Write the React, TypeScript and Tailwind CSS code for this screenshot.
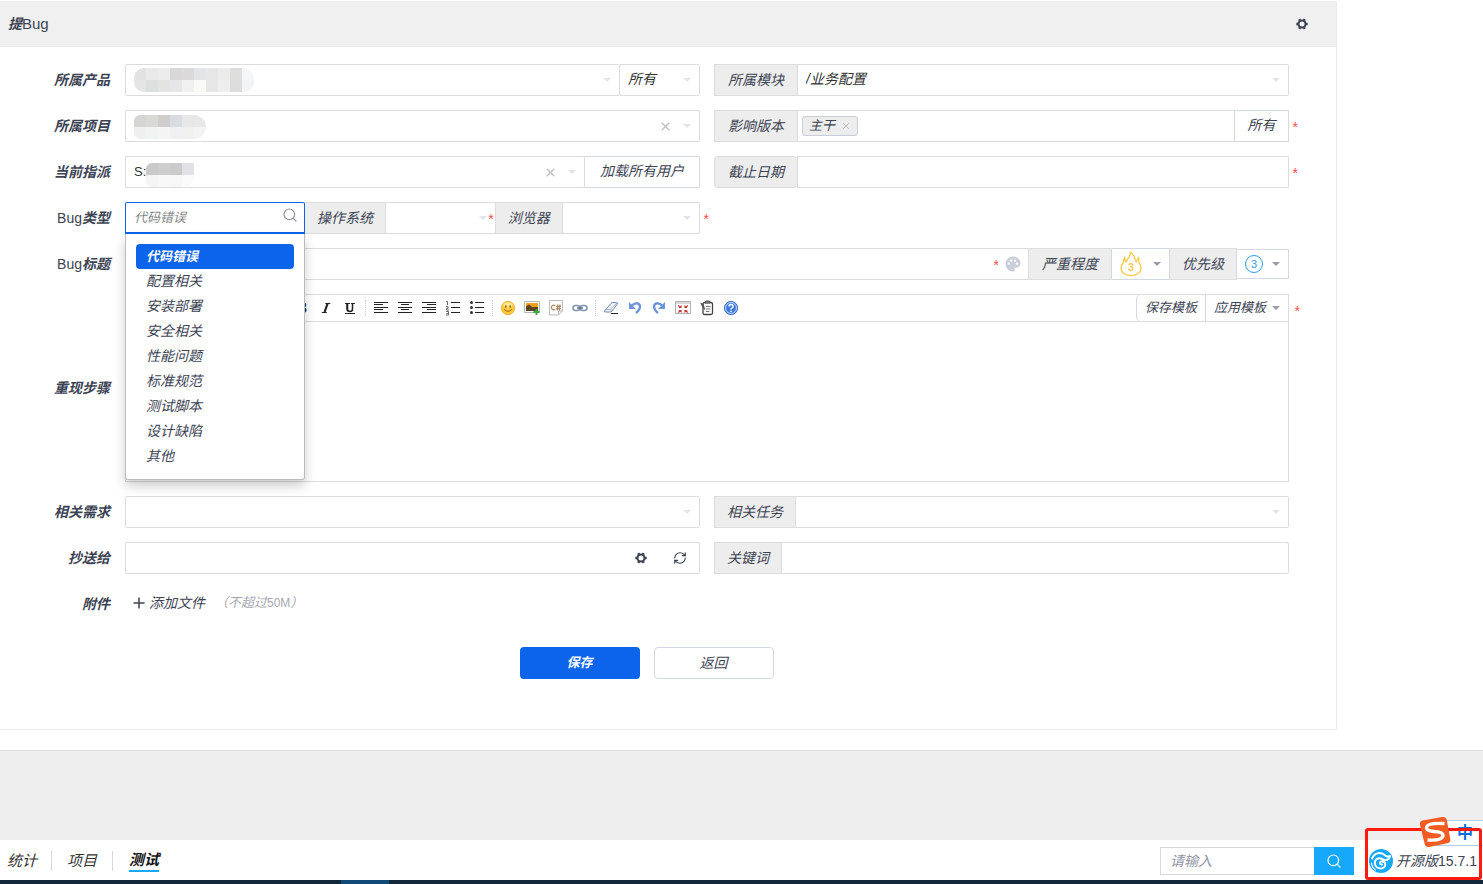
import type { ReactNode } from "react";
import { RefreshCw, Search, X } from "lucide-react";
import { MdPalette } from "react-icons/md";

const bugTypes = [
    "代码错误",
    "配置相关",
    "安装部署",
    "安全相关",
    "性能问题",
    "标准规范",
    "测试脚本",
    "设计缺陷",
    "其他",
];

const productBlocks = [
    ["#e1e2e3", "#e9e9ea", "#ececec", "#d8d8da", "#dbd9da", "#e3e4e5", "#e6e6e7", "#ebebeb", "#dededd", "#f4f5f6"],
    ["#e5e5e5", "#dcdfde", "#e3e3e2", "#e6e6e9", "#f0f0f1", "#f9f9f7", "#e6e6e6", "#ededee", "#dcdcdc", "#f3f4f5"],
];

const projectBlocks = [
    ["#d5d5d4", "#d8d8d7", "#cfcecd", "#d8dce1", "#e6e7e6", "#e8e8e8"],
    ["#efefee", "#f1f3f2", "#f5f4f5", "#eef0f2", "#f0f0ef", "#f3f3f3"],
];

const userBlocks = [
    ["#c9c9ca", "#cdcdce", "#cbcbcb", "#e0e1e6"],
    ["#f5f5f5", "#f8f8f8", "#f7f7f7", "#fafafa"],
];

function Mosaic({ rows, radius }: { rows: string[][]; radius: string }) {
    return (
        <div className={`overflow-hidden ${radius}`}>
            <svg width={rows[0].length * 12} height="24" shapeRendering="crispEdges" className="block">
                {rows.map((row, y) =>
                    row.map((color, x) => (
                        <rect key={`${x}-${y}`} x={x * 12} y={y * 12} width="12" height="12" fill={color} />
                    ))
                )}
            </svg>
        </div>
    );
}

function Gear() {
    return (
        <svg width="12" height="12" viewBox="0 0 12 12" fill="none" stroke="currentColor">
            <circle cx="6" cy="6" r="3.5" strokeWidth="2" />
            <path d="M.3 6H2M10 6h1.700M3.200 1.200L4 2.500M8 9.500l.8 1.300M8.800 1.200L8 2.500M4 9.500l-.8 1.300" strokeWidth="2.400" />
        </svg>
    );
}

function Caret({ className }: { className: string }) {
    return (
        <svg width="8" height="4" viewBox="0 0 8 4" fill="currentColor" className={className}>
            <path d="M0 0h8L4 4z" />
        </svg>
    );
}

function Star({ className }: { className: string }) {
    return <span className={`absolute not-italic leading-5 text-[#ff4d4f] ${className}`}>*</span>;
}

function Addon({ htmlFor, className = "px-[13px]", children }: { htmlFor?: string; className?: string; children: ReactNode }) {
    return (
        <label
            htmlFor={htmlFor}
            className={`flex h-8 shrink-0 items-center whitespace-nowrap border border-[#dcdcdc] bg-[#ededed] text-[#3c4353] ${className}`}
        >
            {children}
        </label>
    );
}

type SelectProps = {
    id: string;
    label?: string;
    value?: string;
    className?: string;
    clearable?: boolean;
    upright?: boolean;
    children?: ReactNode;
};

function Select({ id, label, value = "", className = "flex-1", clearable, upright, children }: SelectProps) {
    return (
        <div className={`relative min-w-0 ${className}`}>
            <select
                id={id}
                aria-label={label}
                className={`h-8 w-full appearance-none rounded-xs border border-[#dcdcdc] bg-white pl-2 pr-6 text-[#333] outline-none ${upright ? "text-[13px] not-italic" : "pb-0.5"}`}
            >
                <option>{value}</option>
            </select>
            {children}
            {clearable && (
                <button type="button" aria-label="清除" className="absolute right-7 top-[10px] text-[#c4c4c4]">
                    <X size={13} strokeWidth={3} />
                </button>
            )}
            <Caret className="pointer-events-none absolute right-[9px] top-[14px] text-[#e2e4ea]" />
        </div>
    );
}

function Row({ label, htmlFor, labelClass = "h-8", children }: { label: ReactNode; htmlFor?: string; labelClass?: string; children: ReactNode }) {
    return (
        <div className="flex">
            <label
                htmlFor={htmlFor}
                className={`flex w-[125px] shrink-0 items-center justify-end pr-[15px] font-bold text-[#3c4353] ${labelClass}`}
            >
                {label}
            </label>
            <div className="min-w-0 flex-1">{children}</div>
        </div>
    );
}

function Tool({ name, children }: { name: string; children: ReactNode }) {
    return (
        <button type="button" aria-label={name} className="flex h-full w-6 shrink-0 items-center justify-center">
            <svg width="16" height="16" viewBox="0 0 16 16" fill="none">
                {children}
            </svg>
        </button>
    );
}

function ToolGap() {
    return (
        <span className="flex h-4 w-[7px] shrink-0 justify-center">
            <span className="w-px border-l border-dotted border-[#ccc]" />
        </span>
    );
}

function Toolbar() {
    return (
        <div className="flex h-[27px] items-center overflow-hidden border-b border-[#dcdcdc] pl-[164px]">
            <button type="button" className="w-6 shrink-0 font-serif text-[15px] font-bold not-italic text-[#222]">B</button>
            <Tool name="斜体">
                <path d="M9.6 3.5L6.6 12" stroke="#222" strokeWidth="2.2" />
                <path d="M7.3 3.5h5M3.8 12.5h5" stroke="#222" />
            </Tool>
            <Tool name="下划线">
                <path d="M5.5 3v6q0 2.5 2.5 2.500T10.500 9V3" stroke="#222" strokeWidth="1.5" />
                <path d="M5 3v6q0 1.5 1 2" stroke="#222" strokeWidth="1.5" />
                <path d="M3 3.5h5M9 3.5h4M3 13.5h10" stroke="#222" />
            </Tool>
            <ToolGap />
            <Tool name="左对齐">
                <path d="M1 2.5h14M1 4.5h9M1 7.5h14M1 9.5h9M1 12.5h14" stroke="#222" />
            </Tool>
            <Tool name="居中">
                <path d="M1 2.5h14M4 4.5h8M1 7.5h14M4 9.5h8M1 12.5h14" stroke="#222" />
            </Tool>
            <Tool name="右对齐">
                <path d="M1 2.5h14M6 4.5h9M1 7.5h14M6 9.5h9M1 12.5h14" stroke="#222" />
            </Tool>
            <Tool name="编号">
                <path d="M6 2.5h9M6 7.5h9M6 12.5h9" stroke="#222" />
                <path d="M1 1.5h1.500V5M1 6.500h2v2H1.500V10H4M1 11.500h2.500V15H1M1.500 13.500h2" stroke="#555" strokeWidth="0.9" />
            </Tool>
            <Tool name="项目符号">
                <path d="M6 2.5h9M6 7.5h9M6 12.5h9" stroke="#222" />
                <circle cx="2.5" cy="2.5" r="1.5" fill="#333" />
                <circle cx="2.5" cy="7.5" r="1.5" fill="#333" />
                <circle cx="2.5" cy="12.5" r="1.5" fill="#333" />
            </Tool>
            <ToolGap />
            <Tool name="表情">
                <circle cx="8" cy="8" r="6.7" fill="#fcc93a" stroke="#e8ad35" strokeWidth="0.8" />
                <ellipse cx="8" cy="4.8" rx="4.6" ry="2.5" fill="#ffe78c" />
                <ellipse cx="5.8" cy="6.5" rx="0.8" ry="1.2" fill="#7b5a20" />
                <ellipse cx="10.2" cy="6.5" rx="0.8" ry="1.2" fill="#7b5a20" />
                <path d="M3.8 9q4.2 4.6 8.4 0" stroke="#9a681a" />
            </Tool>
            <Tool name="图片">
                <path d="M.5 1.5h15v11H.5z" fill="#fff" stroke="#b5b5b5" />
                <path d="M2 3h12v4H2z" fill="#f0a01c" />
                <path d="M2 6.5l3-2L8 7h6v4H2z" fill="#5b4622" />
                <path d="M12.5 9v6M9.5 12h6" stroke="#3aa845" strokeWidth="2" />
            </Tool>
            <Tool name="代码">
                <path d="M1.5.5h13V11l-4 4h-9z" fill="#fafafa" stroke="#bbb" />
                <path d="M14.5 11h-4v4" stroke="#bbb" />
                <path d="M7.3 5.5Q3.5 4.3 3.5 7.5t3.8 2M9.8 4.5l-.5 6M12 4.5l-.5 6M8.3 6.400H13M8 8.6h4.8" stroke="#a5825a" strokeWidth="1.1" />
            </Tool>
            <Tool name="链接">
                <rect x="1" y="5.5" width="7" height="5" rx="2.5" stroke="#8093ab" strokeWidth="1.5" />
                <rect x="8" y="5.5" width="7" height="5" rx="2.5" stroke="#8093ab" strokeWidth="1.5" />
                <path d="M5 8h6" stroke="#526b8c" strokeWidth="1.5" />
            </Tool>
            <ToolGap />
            <Tool name="清除格式">
                <path d="M1.5 11L8 3.500q.8-.9 2-.9h3.300q1.800 0 .9 1.700L9 11q-.8 1-2 1H2.700q-1.700 0-1.200-1z" fill="#f5f8fc" stroke="#6d86ad" />
                <path d="M2 10l5-.8q1.500-.1 1.500 1.800M7.500 9L14 3" stroke="#8ba0c2" strokeWidth="0.8" />
                <path d="M8 13.5h7" stroke="#222" />
            </Tool>
            <Tool name="撤销">
                <path d="M4 6q6-4.5 8.300-1.500Q14.500 8 9 13" stroke="#6d95dc" strokeWidth="2.4" />
                <path d="M2 2v7h7z" fill="#6d95dc" />
            </Tool>
            <Tool name="重做">
                <path d="M12 6Q6 1.500 3.700 4.500 1.500 8 7 13" stroke="#6d95dc" strokeWidth="2.4" />
                <path d="M14 2v7H7z" fill="#6d95dc" />
            </Tool>
            <Tool name="全屏">
                <path d="M.5 1.5h15v12H.5z" fill="#fff" stroke="#b0b0b0" />
                <path d="M1 3h14" stroke="#ccc" strokeWidth="1.5" />
                <path d="M3 5.5l3 2M13 5.5l-3 2M3 12.5l3-2M13 12.5l-3-2" stroke="#d33a3a" strokeWidth="1.4" />
                <path d="M6.5 5v3h-3zM9.5 5v3h3zM6.5 13v-3h-3zM9.5 13v-3h3z" fill="#c52c2c" />
            </Tool>
            <Tool name="源代码">
                <rect x="4" y="2.5" width="9.5" height="12" rx="1.5" stroke="#444" strokeWidth="1.3" />
                <path d="M6 3l1-2h3.500l1 2z" fill="#999" stroke="#444" />
                <path d="M7 6.5h4.500M7 9h4.500M7 11.500h3.500" stroke="#777" />
                <path d="M1 2.5L4.500 4l2 6.500-3-3z" fill="#555" />
            </Tool>
            <Tool name="帮助">
                <circle cx="8" cy="8" r="6.6" fill="#3f7bdc" stroke="#3a6cc4" />
                <circle cx="8" cy="8" r="5.5" stroke="#dbe8fb" strokeWidth="0.9" />
                <path d="M6 6.600q0-2 2-2t2 1.800q0 1.200-1.200 1.700-.8.400-.8 1.300M8 10.700V12" stroke="#fff" strokeWidth="1.5" />
            </Tool>
            <div className="ml-auto flex h-full shrink-0 text-[13px] text-[#3c4353]">
                <button type="button" className="rounded-l border-l border-[#d5d8e0] px-2">保存模板</button>
                <button type="button" className="flex items-center gap-[6px] border-l border-[#d5d8e0] px-2">
                    应用模板
                    <Caret className="text-[#9a9ca8]" />
                </button>
            </div>
        </div>
    );
}

function BugTypePicker() {
    return (
        <div className="relative w-[180px] shrink-0">
            <input
                id="type"
                placeholder="代码错误"
                className="h-8 w-full rounded-t-xs border border-b-2 border-[#0c64eb] bg-white pb-px pl-2 pr-8 text-[13px] outline-none placeholder:text-[#888]"
            />
            <Search size={16} strokeWidth={1.8} className="absolute right-[7px] top-[5px] text-[#8b91a5]" />
            <ul className="absolute left-0 top-8 z-10 w-full rounded-b-[3px] border border-t-0 border-[#bbb] bg-white p-[10px] shadow-[0_6px_12px_rgba(0,0,0,0.2)]">
                {bugTypes.map((type, index) => (
                    <li key={type}>
                        <button
                            type="button"
                            className={
                                index === 0
                                    ? "block h-[25px] w-full rounded-[4px] bg-[#0c64eb] px-[10px] text-left text-[13px] font-bold leading-[25px] text-white"
                                    : "block h-[25px] w-full px-[10px] text-left leading-[25px] text-[#3c4353]"
                            }
                        >
                            {type}
                        </button>
                    </li>
                ))}
            </ul>
        </div>
    );
}

function BugForm() {
    return (
        <form className="flex flex-col gap-[14px] pb-[50px] pr-[47px] pt-[17px]">
            <Row label="所属产品" htmlFor="product">
                <div className="grid grid-cols-2 gap-[14px]">
                    <div className="flex">
                        <Select id="product">
                            <div className="pointer-events-none absolute left-[9px] top-1">
                                <Mosaic rows={productBlocks} radius="rounded-[10px]" />
                            </div>
                        </Select>
                        <Select id="branch" label="分支" value="所有" className="-ml-px w-[81px]" />
                    </div>
                    <div className="flex">
                        <Addon htmlFor="module">所属模块</Addon>
                        <Select id="module" value="/业务配置" className="-ml-px flex-1" />
                    </div>
                </div>
            </Row>

            <Row label="所属项目" htmlFor="project">
                <div className="grid grid-cols-2 gap-[14px]">
                    <Select id="project" clearable className="w-full">
                        <div className="pointer-events-none absolute left-[9px] top-[5px]">
                            <Mosaic rows={projectBlocks} radius="rounded-r-[12px] rounded-l-[6px]" />
                        </div>
                    </Select>
                    <div className="relative flex">
                        <Addon htmlFor="build">影响版本</Addon>
                        <div className="-ml-px flex h-8 min-w-0 flex-1 items-center border border-[#dcdcdc] px-1">
                            <span className="flex h-5 shrink-0 items-center gap-[6px] rounded-[3px] border border-[#c9cdd8] bg-[#ededed] px-[6px] text-[13px] text-[#3c4353]">
                                主干
                                <button type="button" aria-label="移除主干" className="text-[#b5b5b5]">
                                    <X size={10} strokeWidth={2} />
                                </button>
                            </span>
                            <input id="build" className="h-6 min-w-0 flex-1 outline-none" />
                        </div>
                        <button type="button" className="-ml-px h-8 w-[55px] border border-[#d5d8e0] pb-0.5 text-[#3c4353]">
                            所有
                        </button>
                        <Star className="-right-[9px] top-[7px]" />
                    </div>
                </div>
            </Row>

            <Row label="当前指派" htmlFor="assigned">
                <div className="grid grid-cols-2 gap-[14px]">
                    <div className="flex">
                        <Select id="assigned" value="S:" clearable upright>
                            <div className="pointer-events-none absolute left-[21px] top-[7px]">
                                <Mosaic rows={userBlocks} radius="rounded-l-[6px] rounded-br-[10px]" />
                            </div>
                        </Select>
                        <button type="button" className="-ml-px h-8 w-[116px] rounded-r-xs border border-[#d5d8e0] pb-0.5 text-[#3c4353]">
                            加载所有用户
                        </button>
                    </div>
                    <div className="relative flex">
                        <Addon htmlFor="deadline" className="rounded px-[13px]">截止日期</Addon>
                        <input id="deadline" className="-ml-px h-8 min-w-0 flex-1 border border-[#dcdcdc] px-2 outline-none" />
                        <Star className="-right-[9px] top-[7px]" />
                    </div>
                </div>
            </Row>

            <Row label={<><span className="font-medium not-italic">Bug</span>类型</>} htmlFor="type">
                <div className="grid grid-cols-2 gap-[14px]">
                    <div className="relative flex">
                        <BugTypePicker />
                        <Addon htmlFor="os" className="-ml-px px-3">操作系统</Addon>
                        <div className="relative -ml-px min-w-0 flex-[4]">
                            <Select id="os" className="w-full" />
                            <Star className="right-0.5 top-[7px]" />
                        </div>
                        <Addon htmlFor="browser" className="-ml-px px-3">浏览器</Addon>
                        <Select id="browser" className="-ml-px flex-[5]" />
                        <Star className="-right-[9px] top-[7px]" />
                    </div>
                </div>
            </Row>

            <Row label={<><span className="font-medium not-italic">Bug</span>标题</>} htmlFor="title">
                <div className="flex items-center">
                    <div className="relative min-w-0 flex-1">
                        <input id="title" className="block h-8 w-full border border-[#dcdcdc] pl-2 pr-10 outline-none" />
                        <Star className="right-[30px] top-[7px]" />
                        <button type="button" aria-label="颜色" className="absolute right-[7px] top-[7px] text-[#cbcfdb]">
                            <MdPalette size={18} />
                        </button>
                    </div>
                    <Addon className="-ml-px px-[13px]">严重程度</Addon>
                    <button type="button" aria-label="严重程度" className="relative -ml-px flex h-8 w-[59px] items-center justify-between border border-[#d5d8e0] px-2">
                        <svg width="22" height="26" viewBox="0 0 22 26" fill="none" stroke="#ffcb45" strokeWidth="1.3" strokeLinejoin="round">
                            <path d="M10.500 1q0 4-3.500 8-.5 1-.8 2.200Q4.300 9 4.800 6 3.500 8.500 3.400 11.500 1 14 1 17q.6 7.500 10 7.500t10-7.500q0-3-2-5.500-.8-2.500-.2-5-2 1.800-2.400 4.500-1.900-1-1.600-4.500Q13.500 4 10.500 1z" />
                        </svg>
                        <span className="absolute left-4 top-[10px] text-[11px] font-bold not-italic leading-4 text-[#ffcb45]">3</span>
                        <Caret className="text-[#9a9ca8]" />
                    </button>
                    <Addon className="-ml-px px-3">优先级</Addon>
                    <button type="button" aria-label="优先级" className="-ml-px flex h-[30px] w-[53px] items-center justify-between border border-[#d5d8e0] px-2">
                        <span className="flex h-[18px] w-[18px] items-center justify-center rounded-full border border-[#2b9df0] text-[11px] not-italic text-[#2b9df0]">3</span>
                        <Caret className="text-[#9a9ca8]" />
                    </button>
                </div>
            </Row>

            <Row label="重现步骤" htmlFor="steps" labelClass="">
                <div className="relative border border-[#dcdcdc]">
                    <Toolbar />
                    <textarea id="steps" className="block h-[159px] w-full resize-none p-2 outline-none" />
                    <Star className="-right-[12px] top-[6px]" />
                </div>
            </Row>

            <Row label="相关需求" htmlFor="story">
                <div className="grid grid-cols-2 gap-[14px]">
                    <Select id="story" className="w-full" />
                    <div className="flex">
                        <Addon htmlFor="task" className="px-3">相关任务</Addon>
                        <Select id="task" className="-ml-px flex-1" />
                    </div>
                </div>
            </Row>

            <Row label="抄送给" htmlFor="mailto">
                <div className="grid grid-cols-2 gap-[14px]">
                    <div className="flex h-8 rounded-xs border border-[#dcdcdc] text-[#3c4353]">
                        <input id="mailto" className="min-w-0 flex-1 px-2 outline-none" />
                        <button type="button" aria-label="设置" className="flex w-[39px] items-center justify-center">
                            <Gear />
                        </button>
                        <button type="button" aria-label="刷新" className="flex w-[39px] items-center justify-center">
                            <RefreshCw size={14} strokeWidth={2} />
                        </button>
                    </div>
                    <div className="flex">
                        <Addon htmlFor="keywords" className="px-3">关键词</Addon>
                        <input id="keywords" className="-ml-px h-8 min-w-0 flex-1 rounded-r-xs border border-[#dcdcdc] px-2 outline-none" />
                    </div>
                </div>
            </Row>

            <Row label="附件">
                <div className="flex h-8 items-center pb-0.5 pl-2 text-[#3c4353]">
                    <button type="button" className="flex items-center gap-1">
                        <svg width="12" height="12" viewBox="0 0 12 12" stroke="currentColor" strokeWidth="1.5">
                            <path d="M6 .5v11M.5 6h11" />
                        </svg>
                        添加文件
                    </button>
                    <span className="ml-[10px] text-[13px] text-[#a5a8b3]">
                        （不超过<span className="text-[12px] not-italic">50M</span>）
                    </span>
                </div>
            </Row>

            <div className="flex justify-center gap-[14px] pl-1 pt-[13px]">
                <button type="button" className="h-8 w-[120px] rounded bg-[#0c64eb] text-[13px] font-bold text-white">保存</button>
                <button type="button" className="h-8 w-[120px] rounded border border-[#d5d8e0] text-[#3c4353]">返回</button>
            </div>
        </form>
    );
}

function Footer() {
    return (
        <footer className="relative flex h-10 items-center justify-between bg-white pt-0.5">
            <nav className="flex items-center text-[15px] leading-5 text-[#333]">
                <a href="#stats" className="pl-[7px] pr-[14px]">统计</a>
                <a href="#project" className="border-x border-[#d8d8d8] px-[15px]">项目</a>
                <a href="#qa" className="mx-4 border-b-2 border-[#16a8fa] font-bold text-[#111]">测试</a>
            </nav>
            <div className="flex items-center">
                <input
                    aria-label="搜索"
                    placeholder="请输入"
                    className="h-7 w-[154px] border border-r-0 border-[#d8d8d8] px-[9px] outline-none placeholder:text-[#9195a5]"
                />
                <button type="button" aria-label="搜索" className="mr-[11px] flex h-7 w-10 items-center justify-center bg-[#16a8fa] text-white">
                    <Search size={16} strokeWidth={1.8} />
                </button>
                <a href="#version" className="flex w-[118px] items-center gap-[3px] pl-1 text-[#3c4353]">
                    <svg width="24" height="24" viewBox="0 0 24 24" fill="none" className="shrink-0">
                        <circle cx="12" cy="12" r="12" fill="#16a8fa" />
                        <path d="M3 9.500Q5.500 4 10.500 4q3.500 0 5.500 2.300 2.300 2.200 5 .6-.4 4-4.500 4.200-1.800 0-3.200-1-2.800-1.800-5.600 0Q5 12 6 15.500q1.400 3.800 5.500 4 4.200-.2 4.800-3.700.2-3.300-3-3.600-2.500.2-2.300 2.300.4 1.300 2 1" stroke="#fff" strokeWidth="1.9" strokeLinecap="round" strokeLinejoin="round" />
                        <path d="M2.500 14q.3 4.500 4 7" stroke="#fff" strokeWidth="1.2" strokeLinecap="round" />
                    </svg>
                    <span className="whitespace-nowrap">
                        开源版<span className="not-italic">15.7.1</span>
                    </span>
                </a>
            </div>

            {/* Input method bar and the highlight frame float over the footer corner */}
            <div className="pointer-events-none absolute bottom-[34px] right-0 flex h-[26px] w-[48px] items-center justify-end border-y border-[#b4cde4] bg-white pr-[10px] text-base font-bold not-italic text-[#0a6cd6]">
                中
            </div>
            <div className="pointer-events-none absolute bottom-0 right-px h-[52px] w-[117px] rounded-[3px] border-[3px] border-[#ff1a0e]" />
            <svg width="32" height="32" viewBox="0 0 32 32" className="pointer-events-none absolute bottom-8 right-8">
                <path d="M3.500 4.500L23 1q4-.5 4.800 3l3.500 19q.5 3.500-3 4.200L10 31q-3.500.5-4.300-3L1 9q-.7-3.800 2.500-4.500z" fill="#f25c22" />
                <path d="M25.500 7.500Q8 6.500 7.500 11.500q0 3.500 7.500 4 9.500.3 9 4.500-1.500 5-15.500 4" stroke="#fff" strokeWidth="3.3" fill="none" />
            </svg>
        </footer>
    );
}

export default function App() {
    return (
        <div className="flex min-h-screen flex-col bg-white pt-px font-['Liberation_Sans','Noto_Sans_CJK_SC',sans-serif] text-[14px] italic leading-5">
            <main className="border-b border-[#dcdcdc] pb-5">
                <section className="mr-[146px] border-b border-r border-[#ebebeb]">
                    <header className="flex h-[46px] items-center justify-between border-b border-[#ebebeb] bg-[#f0f0f0] pl-2 pr-7 text-[#3c4353]">
                        <h1 className="font-bold">
                            提<span className="text-[15px] font-medium not-italic">Bug</span>
                        </h1>
                        <button type="button" aria-label="设置">
                            <Gear />
                        </button>
                    </header>
                    <BugForm />
                </section>
            </main>
            <div className="flex-1 bg-[#eeeeee]" />
            <Footer />
            <div className="flex h-1 bg-[#12283a]">
                <div className="ml-[23%] w-12 bg-[#0f4a78]" />
            </div>
        </div>
    );
}
